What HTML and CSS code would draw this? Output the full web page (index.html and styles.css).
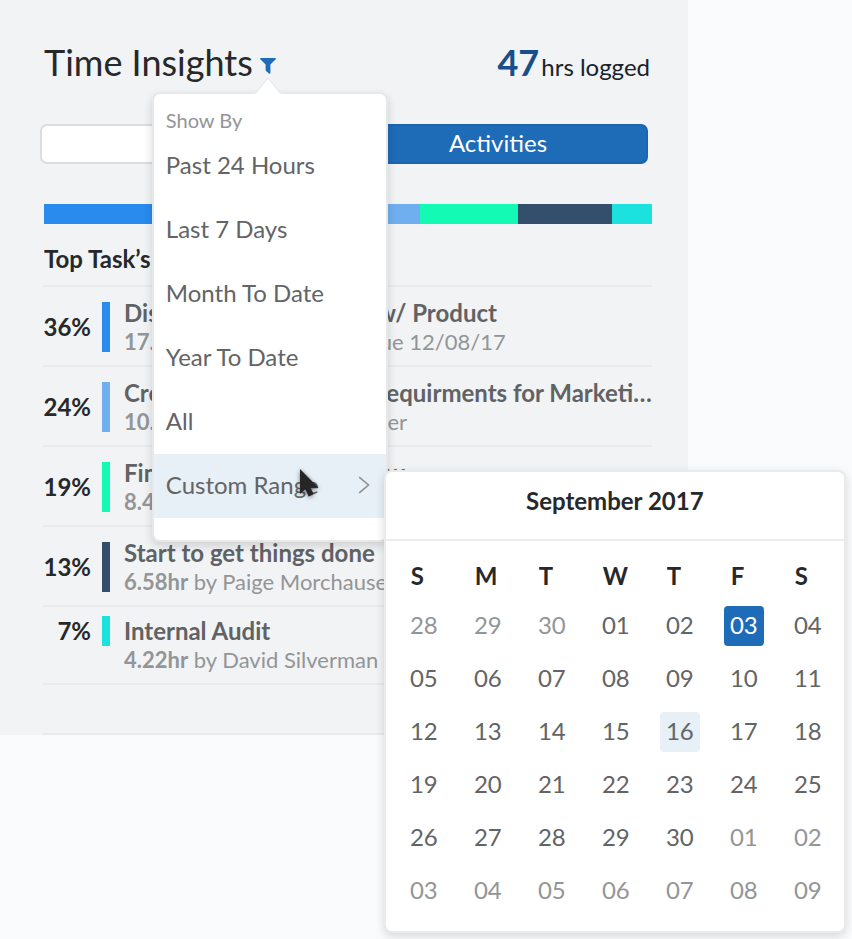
FILE: index.html
```html
<!DOCTYPE html>
<html lang="en">
<head>
<meta charset="utf-8">
<title>Time Insights</title>
<link rel="stylesheet" href="styles.css">
</head>
<body>
<main class="panel">
  <header class="head">
    <h1 class="title">Time Insights</h1>
    <div class="filter">
      <button class="filter-button" type="button" aria-label="Filter" aria-expanded="true">
        <svg width="16" height="16" viewBox="0 0 16 16" aria-hidden="true"><path d="M0.8 0h14.4c.8 0 1 .8.5 1.3L10.400 6.600v8.400c0 .8-.7 1-1.300.5L6 12.900c-.3-.3-.4-.5-.4-.9V6.600L.3 1.300C-.2.800 0 0 .8 0z" fill="#1e6bb8"/></svg>
      </button>
      <div class="menu">
        <svg class="menu-arrow" width="28" height="17" viewBox="0 0 28 17" aria-hidden="true"><path d="M1 16L12.600 1.600q1.400-1.600 2.800 0L27 16" fill="#fff" stroke="#e9ebed" stroke-width="1.500"/><path d="M1 15.500h26V17H1z" fill="#fff"/></svg>
        <h2 class="menu-label">Show By</h2>
        <ul class="menu-list">
          <li><button class="menu-item" type="button">Past 24 Hours</button></li>
          <li><button class="menu-item" type="button">Last 7 Days</button></li>
          <li><button class="menu-item" type="button">Month To Date</button></li>
          <li><button class="menu-item" type="button">Year To Date</button></li>
          <li><button class="menu-item" type="button">All</button></li>
          <li class="submenu">
            <button class="menu-item active" type="button">Custom Range
              <svg width="12" height="18" viewBox="0 0 12 18" aria-hidden="true"><path d="M1.200 1.200L10.500 9l-9.300 7.800" fill="none" stroke="#8f9092" stroke-width="1.600"/></svg>
            </button>
            <svg class="cursor" width="26" height="36" viewBox="0 0 26 36" aria-hidden="true"><path d="M3 3v25l5.300-4.700 3.400 7.300 5-2.300-3.200-6.600H21.500z" fill="#262626"/></svg>
            <section class="calendar">
              <h2 class="month">September 2017</h2>
              <table class="days">
                <thead><tr><th>S</th><th>M</th><th>T</th><th>W</th><th>T</th><th>F</th><th>S</th></tr></thead>
                <tbody>
                  <tr><td><button class="day out">28</button></td><td><button class="day out">29</button></td><td><button class="day out">30</button></td><td><button class="day">01</button></td><td><button class="day">02</button></td><td><button class="day selected">03</button></td><td><button class="day">04</button></td></tr>
                  <tr><td><button class="day">05</button></td><td><button class="day">06</button></td><td><button class="day">07</button></td><td><button class="day">08</button></td><td><button class="day">09</button></td><td><button class="day">10</button></td><td><button class="day">11</button></td></tr>
                  <tr><td><button class="day">12</button></td><td><button class="day">13</button></td><td><button class="day">14</button></td><td><button class="day">15</button></td><td><button class="day hover">16</button></td><td><button class="day">17</button></td><td><button class="day">18</button></td></tr>
                  <tr><td><button class="day">19</button></td><td><button class="day">20</button></td><td><button class="day">21</button></td><td><button class="day">22</button></td><td><button class="day">23</button></td><td><button class="day">24</button></td><td><button class="day">25</button></td></tr>
                  <tr><td><button class="day">26</button></td><td><button class="day">27</button></td><td><button class="day">28</button></td><td><button class="day">29</button></td><td><button class="day">30</button></td><td><button class="day out">01</button></td><td><button class="day out">02</button></td></tr>
                  <tr><td><button class="day out">03</button></td><td><button class="day out">04</button></td><td><button class="day out">05</button></td><td><button class="day out">06</button></td><td><button class="day out">07</button></td><td><button class="day out">08</button></td><td><button class="day out">09</button></td></tr>
                </tbody>
              </table>
            </section>
          </li>
        </ul>
      </div>
    </div>
    <p class="total"><strong>47</strong> hrs logged</p>
  </header>

  <div class="tabs">
    <button class="tab" type="button">Tasks</button>
    <button class="tab tab-on" type="button">Activities</button>
  </div>

  <div class="stack">
    <span class="blue"></span><span class="sky"></span><span class="green"></span><span class="navy"></span><span class="cyan"></span>
  </div>

  <h2 class="subtitle">Top Task’s</h2>
  <ul class="tasks">
    <li class="task"><span class="percent">36%</span><span class="bar blue"></span>
      <div class="info"><h3 class="name">Discuss all new designs w/ Product</h3><p class="meta"><b>17.23hr</b> by Paige Moore, due 12/08/17</p></div></li>
    <li class="task"><span class="percent">24%</span><span class="bar sky"></span>
      <div class="info"><h3 class="name">Create the list of all the requirments for Marketi…</h3><p class="meta"><b>10.54hr</b> by Jonathan Fletcher</p></div></li>
    <li class="task"><span class="percent">19%</span><span class="bar green"></span>
      <div class="info"><h3 class="name">Finalize the project review</h3><p class="meta"><b>8.46hr</b> by Dana Cole</p></div></li>
    <li class="task"><span class="percent">13%</span><span class="bar navy"></span>
      <div class="info"><h3 class="name">Start to get things done</h3><p class="meta"><b>6.58hr</b> by Paige Morchauser</p></div></li>
    <li class="task compact"><span class="percent">7%</span><span class="bar cyan"></span>
      <div class="info"><h3 class="name">Internal Audit</h3><p class="meta"><b>4.22hr</b> by David Silverman</p></div></li>
  </ul>
  <hr class="end">
</main>
</body>
</html>
```
FILE: styles.css
```css
* { box-sizing: border-box; }
body {
  margin: 0;
  min-height: 100vh;
  background: #fafbfd;
  color: #26282a;
  font: 24px/28px Lato, "Liberation Sans", sans-serif;
}
h1, h2, h3, p, ul { margin: 0; padding: 0; }
ul { list-style: none; }
button { font: inherit; color: inherit; border: 0; background: none; padding: 0; cursor: pointer; }
svg { display: block; }

.blue { background: #288bed; }
.sky { background: #6fafef; }
.green { background: #12fab3; }
.navy { background: #334f6c; }
.cyan { background: #1ce2df; }

.panel {
  margin-right: 164px;
  padding: 40px 36px 0 44px;
  background: #f1f3f5;
}

.head { display: flex; align-items: baseline; height: 84px; }
.title { font-size: 36px; line-height: 44px; font-weight: 400; white-space: nowrap; }
.total { margin-left: auto; padding-right: 2px; line-height: 44px; color: #18222c; white-space: nowrap; }
.total strong { font-size: 36px; color: #174f8c; margin-right: -4px; }

.filter { position: relative; align-self: flex-start; margin: 18px 0 0 7px; }
.filter-button { display: block; }

.menu {
  position: absolute;
  z-index: 2;
  top: 36px;
  left: -106px;
  width: 232px;
  padding-bottom: 22px;
  border-radius: 6px;
  background: #fff;
  color: #626466;
  box-shadow: 0 0 0 2px #e6e8ea, 0 4px 10px 2px rgba(0, 0, 0, .15);
}
.menu-arrow { position: absolute; top: -16px; left: 100px; }
.menu-label { padding: 12px 12px 0; height: 40px; font-size: 20px; line-height: 28px; font-weight: 400; color: #939597; }
.menu-item { display: flex; align-items: center; justify-content: space-between; width: 100%; height: 64px; padding: 0 16px 2px 12px; text-align: left; }
.active { background: #e7eff7; }
.submenu { position: relative; }
.cursor { position: absolute; top: 12px; left: 143px; filter: drop-shadow(0 1px 2px rgba(0, 0, 0, .5)); }

.calendar {
  position: absolute;
  top: 18px;
  left: 100%;
  width: 458px;
  padding-bottom: 14px;
  border-radius: 6px;
  background: #fff;
  box-shadow: 0 0 0 2px #e8eaeb, 0 3px 10px 2px rgba(0, 0, 0, .15);
}
.month { height: 69px; padding-top: 15px; border-bottom: 2px solid #ebecee; font-size: 24px; color: #26282a; text-align: center; }
.days { width: 448px; margin: 14px -8px 0 18px; border-collapse: collapse; table-layout: fixed; }
.days th { height: 44px; padding: 0 0 2px 7px; text-align: left; color: #26282a; }
.days td { height: 53px; padding: 0; }
.day { display: block; width: 40px; height: 40px; padding-bottom: 2px; border-radius: 4px; }
.out { color: #939597; }
.selected { background: #1e6bb8; color: #fff; }
.hover { background: #e7eff7; }

.tabs { display: flex; height: 40px; margin: 0 4px 0 -4px; }
.tab { flex: 1; padding-bottom: 2px; border: 2px solid #dcdddf; border-radius: 7px 0 0 7px; background: #fff; }
.tab-on { padding-left: 8px; border-color: #1a64b0; border-radius: 0 7px 7px 0; background: #1e6bb8; color: #fff; }

.stack { display: grid; grid-template-columns: 219fr 157fr 98fr 94fr 40fr; height: 20px; margin: 40px 0 21px; }

.subtitle { font-size: 24px; height: 40px; }
.tasks { margin-left: -1px; border-top: 2px solid #e9eaec; }
.task { display: grid; grid-template-columns: 48px 8px minmax(0, 1fr); column-gap: 11px; align-items: center; height: 80px; padding-top: 2px; border-bottom: 2px solid #e9eaec; }
.percent { text-align: right; font-weight: 700; }
.bar { height: 50px; }
.info { padding: 2px 0 0 3px; }
.name { font-size: 24px; color: #606264; white-space: nowrap; }
.meta { font-size: 22px; line-height: 30px; color: #939597; white-space: nowrap; }
.compact { height: 78px; padding-top: 9px; align-items: start; }
.compact .percent, .compact .info { padding-top: 1px; }
.compact .bar { height: 30px; }
.end { height: 2px; margin: 48px 0 0 -1px; border: 0; background: #e9eaec; }
```
